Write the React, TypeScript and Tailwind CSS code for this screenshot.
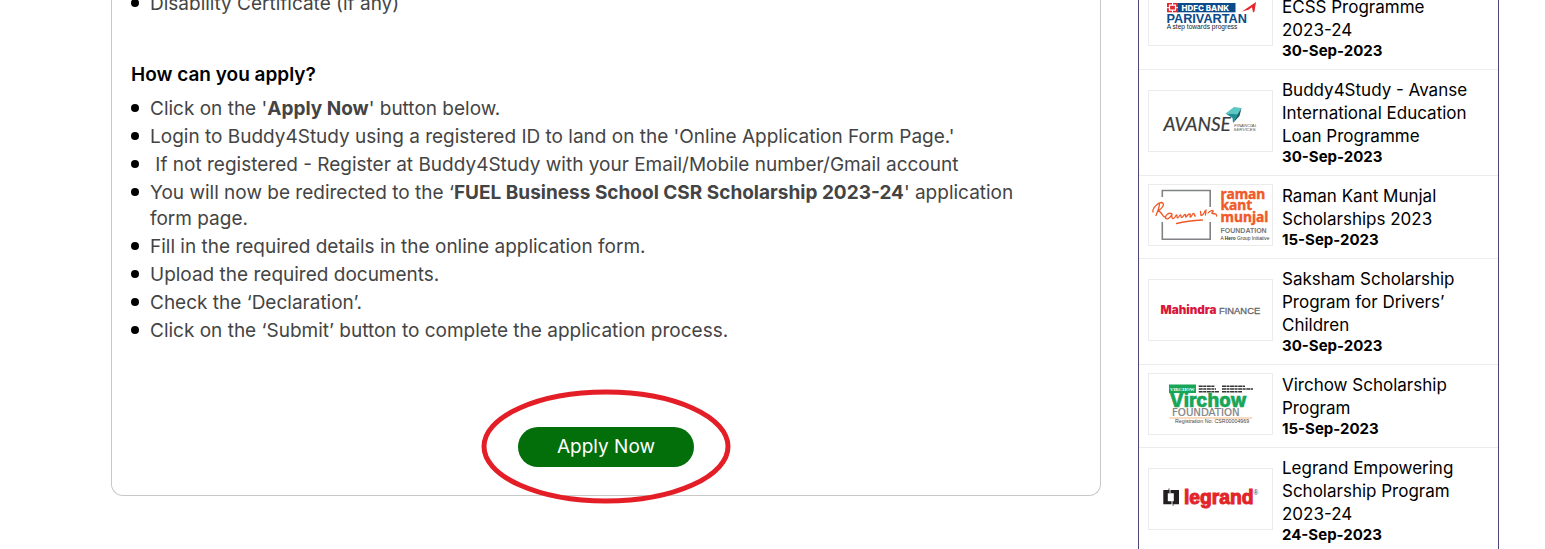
import type { ReactNode } from "react";

type Scholarship = {
  title: string;
  date: string;
  logo: ReactNode;
  titleClass?: string;
};

const HdfcLogo = () => (
  <svg viewBox="1 1 123 60" className="w-full" role="img" aria-label="HDFC Bank Parivartan">
    <rect x="29" y="19" width="58.5" height="9.3" fill="#0b4a8b" />
    <rect x="19" y="19" width="11" height="9.3" fill="#e02a33" />
    <path d="M21.5 21.2h6v5h-6z" fill="none" stroke="#fff" strokeWidth="1.2" />
    <path d="M24.5 19v2.5M24.5 26v2.5M19 23.7h2.5M27.5 23.7H30" stroke="#fff" strokeWidth="1" />
    <text x="33.5" y="26.5" fontSize="8" fontWeight="800" fontFamily="Inter" fill="#fff">
      HDFC BANK
    </text>
    <path d="M108 18 94 27.5l6.5-1.8 3.5-2.5 1 5.3 1.5-1z" fill="#e3262e" />
    <text x="18.5" y="39" fontSize="12.7" fontWeight="700" fontFamily="Liberation Sans" fill="#0b4a8b">
      PARIVARTAN
    </text>
    <text x="18.7" y="45" fontSize="6.6" fontFamily="Liberation Sans" fill="#222">
      A step towards progress
    </text>
  </svg>
);

const AvanseLogo = () => (
  <svg viewBox="1 1 123 60" className="w-full" role="img" aria-label="Avanse Financial Services">
    <text x="15.5" y="40.5" fontSize="19" fontStyle="italic" fontFamily="Lato" fill="#3a3a3c" stroke="#3a3a3c" strokeWidth=".2">
      AVANSE
    </text>
    <path d="M77.5 23.5 86 17l7.5 1-4 6.3z" fill="#5cc7c3" />
    <path d="M77.5 23.5 89.5 24.3 85 33l-.5-5z" fill="#1b8f92" />
    <path d="M93.5 18 91.5 26 85 33l4.5-8.7z" fill="#0d5f68" />
    <g fontSize="4.4" fontStyle="italic" fontFamily="Liberation Sans" fill="#555">
      <text x="86" y="36.5">FINANCIAL</text>
      <text x="85.5" y="41">SERVICES</text>
    </g>
  </svg>
);

const RamanLogo = () => (
  <svg viewBox="1 1 123 60" className="w-full" role="img" aria-label="Raman Kant Munjal Foundation">
    <path d="M14.3 13V6.5h47.9V23M14.3 38v17.3h47.9V38" fill="none" stroke="#808285" strokeWidth="1.6" />
    <path
      d="M5 28c-1-3 4-9 8-9.5 4 0 3 5-3 8.5 4 0 4 6 7 6M11.5 19.5c0 4-2 8-3.500 12M23.500 29.500c-3-1-6 1.500-6 4s5 1.500 6.500-3.500c-.5 3 0 5 1.500 4.500s2-3 3-3.500 0 3 1 3 2-3 3-3 0 2.500 1.200 2.500 2-3 3.300-3 0 2.500 1 2.500 1.500-3 3.500-3-.5 3.500 1 3 1.500-3.500 3-3.500.5 3 2 2.500M52.500 27.500l.5 4c1.500 0 3-2 4-4.500M58 26l-.5 5M60 29c2-3 6-3 5-1.500s-2 1.500 0 2 4 0 3.500 2.500M28.500 39.500c8-2 16-3 26-3.500"
      fill="none"
      stroke="#f05a28"
      strokeWidth="1.3"
      strokeLinecap="round"
      strokeLinejoin="round"
    />
    <g fontSize="13.8" fontWeight="700" fontFamily="Noto Sans" fill="#f05a28" stroke="#f05a28" strokeWidth=".4">
      <text x="72.5" y="14.8">raman</text>
      <text x="72.5" y="26.3">kant</text>
      <text x="72.5" y="37.8">munjal</text>
    </g>
    <text x="72.5" y="48.8" fontSize="7" fontWeight="700" fontFamily="Liberation Sans" fill="#77787b">
      FOUNDATION
    </text>
    <text x="72.5" y="55.8" fontSize="4.8" fontFamily="Liberation Sans" fill="#333">
      A <tspan fontWeight="700">Hero</tspan> Group Initiative
    </text>
  </svg>
);

const MahindraLogo = () => (
  <svg viewBox="1 1 123 60" className="w-full" role="img" aria-label="Mahindra Finance">
    <text x="12.5" y="35.3" fontSize="11.7" fontWeight="900" fontFamily="Inter" fill="#d8173d">
      Mahindra
    </text>
    <text x="71" y="35.3" fontSize="9.4" fontFamily="Liberation Sans" fill="#66686b" stroke="#66686b" strokeWidth=".3">
      FINANCE
    </text>
  </svg>
);

const VirchowLogo = () => (
  <svg viewBox="1 1 123 60" className="w-full" role="img" aria-label="Virchow Foundation">
    <rect x="21" y="11.5" width="27" height="8.5" fill="#18a558" />
    <text x="22" y="17.8" fontSize="4.8" fontWeight="700" fontFamily="Liberation Serif" fill="#fff">
      VIRCHOW
    </text>
    <path
      d="M50.7 13.3H67M50.7 16H68M50.7 18.7H71M74 13.3H97M74 16h31M74 18.7H94"
      stroke="#333"
      strokeWidth="1.6"
      strokeDasharray="4 .5 3 .6"
    />
    <text x="21.5" y="34.3" fontSize="18.6" fontWeight="800" fontFamily="Inter" fill="#18a558" stroke="#18a558" strokeWidth=".4">
      Virchow
    </text>
    <text x="24" y="43.4" fontSize="10.2" fontFamily="DejaVu Sans" fill="#808285" stroke="#808285" strokeWidth=".2">
      FOUNDATION
    </text>
    <path d="M21.3 45h83" stroke="#f0a565" strokeWidth=".8" />
    <text x="27" y="50.2" fontSize="5.3" fontFamily="Liberation Sans" fill="#444">
      Registration No: CSR00004969
    </text>
  </svg>
);

const LegrandLogo = () => (
  <svg viewBox="1 1 123 60" className="w-full" role="img" aria-label="Legrand">
    <path d="M15.3 22h15.7v14.3H15.3zM19.8 25.2v8h6v-8z" fill="#231f20" fillRule="evenodd" />
    <path d="M21 20.5v4.700M25 33.200v4.500" stroke="#231f20" strokeWidth=".9" />
    <path d="M22 21.500v4M24 33v4" stroke="#fff" strokeWidth=".9" />
    <text x="36" y="36.3" fontSize="19.3" fontWeight="700" fontFamily="Liberation Sans" fill="#e2242b" stroke="#e2242b" strokeWidth="1">
      legrand
    </text>
    <text x="105.5" y="27" fontSize="6.5" fontFamily="Liberation Sans" fill="#333">
      ®
    </text>
  </svg>
);

const scholarships: Scholarship[] = [
  {
    title: "ECSS Programme\n2023-24",
    date: "30-Sep-2023",
    logo: <HdfcLogo />,
    titleClass: "flex min-h-[69px] items-end",
  },
  {
    title: "Buddy4Study - Avanse\nInternational Education\nLoan Programme",
    date: "30-Sep-2023",
    logo: <AvanseLogo />,
  },
  {
    title: "Raman Kant Munjal\nScholarships 2023",
    date: "15-Sep-2023",
    logo: <RamanLogo />,
  },
  {
    title: "Saksham Scholarship\nProgram for Drivers’\nChildren",
    date: "30-Sep-2023",
    logo: <MahindraLogo />,
  },
  {
    title: "Virchow Scholarship\nProgram",
    date: "15-Sep-2023",
    logo: <VirchowLogo />,
  },
  {
    title: "Legrand Empowering\nScholarship Program\n2023-24",
    date: "24-Sep-2023",
    logo: <LegrandLogo />,
  },
];

const steps: ReactNode[] = [
  <>
    Click on the '<strong>Apply Now</strong>' button below.
  </>,
  "Login to Buddy4Study using a registered ID to land on the 'Online Application Form Page.'",
  <>&nbsp;If not registered - Register at Buddy4Study with your Email/Mobile number/Gmail account</>,
  <>
    You will now be redirected to the ‘
    <strong>FUEL Business School CSR Scholarship 2023-24</strong>' application
    <br />
    form page.
  </>,
  "Fill in the required details in the online application form.",
  "Upload the required documents.",
  "Check the ‘Declaration’.",
  "Click on the ‘Submit’ button to complete the application process.",
];

function BulletItem({ children }: { children: ReactNode }) {
  return (
    <li className="flex items-start gap-[11px]">
      <span className="mt-2 size-2 shrink-0 rounded-full bg-black" />
      <span className="min-w-0">{children}</span>
    </li>
  );
}

function ScholarshipRow({ title, date, logo, titleClass }: Scholarship) {
  return (
    <li className="flex items-center gap-[9px] border-b border-[#ececec] pt-[9px] pr-2 pb-[10px] pl-[9px]">
      <div className="-mt-[3px] w-[125px] shrink-0 border border-[#ebebeb]">{logo}</div>
      <a href="#" className="min-w-0 flex-1 text-black">
        <span className={`text-[17px] leading-[23px] whitespace-pre-line ${titleClass ?? "block"}`}>
          {title}
        </span>
        <span className="block text-[15px] leading-[17px] font-bold">{date}</span>
      </a>
    </li>
  );
}

export default function App() {
  return (
    <div className="flex h-screen items-start gap-[37px] overflow-hidden bg-white pr-[46px] pl-[111px] font-['Inter',sans-serif]">
      <main className="min-w-0 flex-1 rounded-b-xl border border-t-0 border-[#c8c8c8] px-[19px] pb-7 text-[19px] leading-[26px] text-[#444]">
        <ul className="-mt-[9px]">
          <BulletItem>Disability Certificate (if any)</BulletItem>
        </ul>
        <h2 className="mt-[45px] mb-2 font-semibold text-black">How can you apply?</h2>
        <ul className="flex flex-col gap-[2px]">
          {steps.map((step, i) => (
            <BulletItem key={i}>{step}</BulletItem>
          ))}
        </ul>
        <div className="mt-[83px] flex justify-center">
          <div className="relative">
            <button
              type="button"
              className="block h-10 w-44 rounded-full bg-[#026f0b] text-[19px] text-white"
            >
              Apply Now
            </button>
            <svg
              viewBox="0 0 250 116"
              className="pointer-events-none absolute top-1/2 left-1/2 w-[250px] max-w-none -translate-x-1/2 -translate-y-1/2"
              aria-hidden="true"
            >
              <ellipse cx="125" cy="57.5" rx="122" ry="54.5" fill="none" stroke="#e31e26" strokeWidth="5" />
            </svg>
          </div>
        </div>
      </main>

      <aside className="-mt-9 w-[361px] shrink-0 border-x border-[#4b4876]">
        <ul>
          {scholarships.map((item) => (
            <ScholarshipRow key={item.title} {...item} />
          ))}
        </ul>
      </aside>
    </div>
  );
}
